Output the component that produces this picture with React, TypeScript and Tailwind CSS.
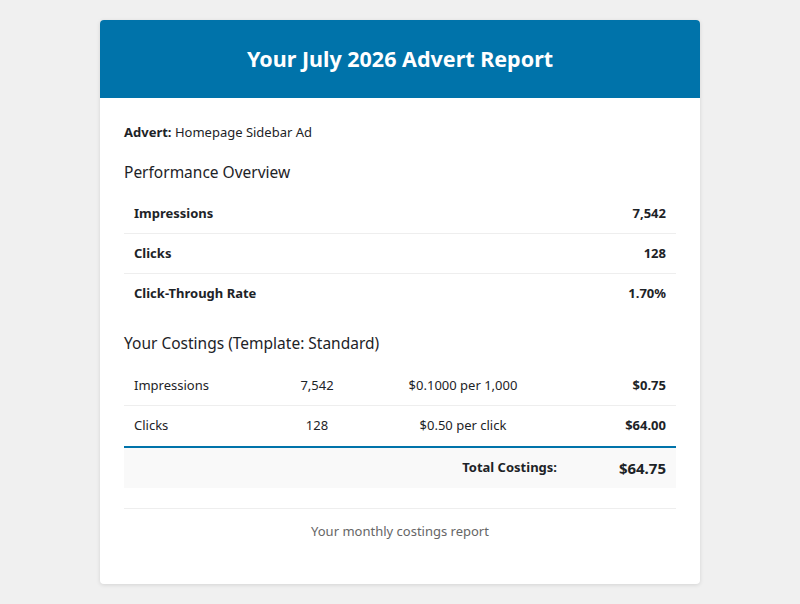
const perf = [
  { label: "Impressions", value: "7,542" },
  { label: "Clicks", value: "128" },
  { label: "Click-Through Rate", value: "1.70%" },
];

const costs = [
  { label: "Impressions", qty: "7,542", rate: "$0.1000 per 1,000", amount: "$0.75" },
  { label: "Clicks", qty: "128", rate: "$0.50 per click", amount: "$64.00" },
];

export default function App() {
  return (
    <div
      className="min-h-[604px] bg-[#f0f0f0] pt-5 text-[#1d2327]"
      style={{ fontFamily: '"Noto Sans", "Open Sans", sans-serif' }}
    >
      <div className="mx-auto w-[600px] overflow-hidden rounded bg-white shadow-[0_1px_4px_rgba(0,0,0,0.12)]">
        {/* Header */}
        <div className="flex h-[78px] items-center justify-center bg-[#0073aa]">
          <h1 className="text-[21.5px] font-bold text-white">Your July 2026 Advert Report</h1>
        </div>

        <div className="px-6 pt-6 pb-[42px]">
          <p className="text-[13px] leading-5">
            <span className="font-bold">Advert:</span> Homepage Sidebar Ad
          </p>

          <h2 className="mt-5 text-[15.5px] leading-5">Performance Overview</h2>
          <div className="mt-3">
            {perf.map((row, i) => (
              <div
                key={row.label}
                className={`flex h-10 items-center justify-between px-2.5 text-[13px] font-bold ${
                  i < perf.length - 1 ? "border-b border-[#eeeeee]" : ""
                }`}
              >
                <span>{row.label}</span>
                <span>{row.value}</span>
              </div>
            ))}
          </div>

          <h2 className="mt-[19px] text-[15.5px] leading-5">Your Costings (Template: Standard)</h2>
          <div className="mt-[13px]">
            {costs.map((row, i) => (
              <div
                key={row.label}
                className={`grid h-10 grid-cols-[151px_84px_208px_109px] items-center text-[13px] ${
                  i < costs.length - 1 ? "border-b border-[#eeeeee]" : ""
                }`}
              >
                <span className="px-2.5">{row.label}</span>
                <span className="px-2.5 text-center">{row.qty}</span>
                <span className="px-2.5 text-center">{row.rate}</span>
                <span className="px-2.5 text-right font-bold">{row.amount}</span>
              </div>
            ))}
            <div className="grid h-[42px] grid-cols-[443px_109px] items-center border-t-2 border-[#0073aa] bg-[#f9f9f9]">
              <span className="px-2.5 text-right text-[13px] font-bold">Total Costings:</span>
              <span className="px-2.5 text-right text-[15px] font-bold">$64.75</span>
            </div>
          </div>

          <div className="mt-5 border-t border-[#eeeeee] pt-[13px] text-center text-[13px] text-[#666666]">
            Your monthly costings report
          </div>
        </div>
      </div>
    </div>
  );
}
